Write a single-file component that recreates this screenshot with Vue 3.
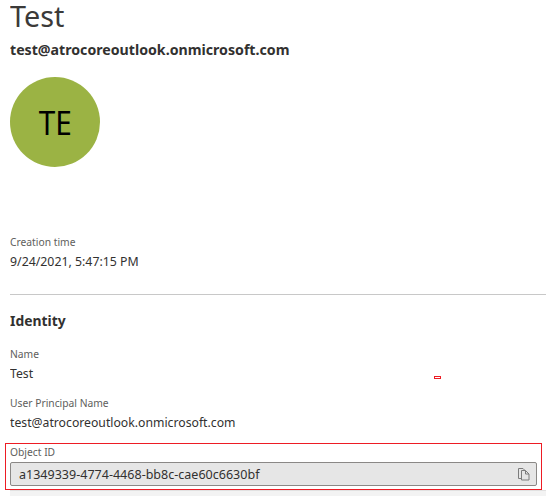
<script setup>
const fields = [
  { key: 'name', label: 'Name', value: 'Test' },
  { key: 'upn', label: 'User Principal Name', value: 'test@atrocoreoutlook.onmicrosoft.com' },
]
</script>

<template>
  <main class="profile">
    <h1 class="title">Test</h1>
    <p class="account">test@atrocoreoutlook.onmicrosoft.com</p>
    <div class="avatar"><span class="initials">TE</span></div>
    <div class="field created">
      <span class="label">Creation time</span>
      <span class="value date">9/24/2021, 5:47:15 PM</span>
    </div>
    <hr class="rule" />
    <h2 class="heading">Identity</h2>
    <div v-for="f in fields" :key="f.key" class="field" :class="f.key">
      <span class="label">{{ f.label }}</span>
      <span class="value">{{ f.value }}</span>
    </div>
    <section class="object">
      <span class="label">Object ID</span>
      <div class="copybox">
        <span class="id">a1349339-4774-4468-bb8c-cae60c6630bf</span>
        <svg class="copy" width="12" height="13" viewBox="0 0 12 13" fill="none" stroke="#7c7c7c">
          <path d="M3.500 10.500h-3v-10h4.500l1.500 1.500" />
          <path d="M3.500 2.500h4l3.500 3.500v6h-7.500z" fill="#e6e6e6" />
          <path d="M7.500 2.500v3.500h3.500" />
        </svg>
      </div>
    </section>
    <div class="strip"></div>
    <i class="mark"></i>
  </main>
</template>

<style>
body { background: #fff; overflow: hidden; }
</style>

<style scoped>
.profile {
  position: relative;
  box-sizing: border-box;
  width: 546px;
  height: 496px;
  padding-left: 10px;
  overflow: hidden;
  display: flex;
  flex-direction: column;
  font-family: "Noto Sans", "Open Sans", sans-serif;
  color: #323130;
}
.title, .account, .heading { margin: 0; white-space: nowrap; transform-origin: 0 50%; }
.title { height: 36px; line-height: 32px; font-size: 28.5px; font-weight: 400; color: #3b3a39; transform: scaleX(1.01); }
.account { height: 41px; line-height: 26px; font-size: 15px; font-weight: 700; transform: scaleX(0.944); }
.avatar {
  width: 90px;
  height: 90px;
  flex: none;
  border-radius: 50%;
  background: #9bb344;
  color: #000;
  display: flex;
  align-items: center;
  justify-content: center;
  font-size: 32px;
  line-height: 44px;
}
.initials { transform: translate(0.5px, 1px) scaleX(0.93); }
.field { display: flex; flex-direction: column; align-items: flex-start; height: 49px; flex: none; white-space: nowrap; }
.created { margin-top: 66px; height: 61px; }
.label, .value, .id { transform-origin: 0 50%; }
.label { font-size: 11px; line-height: 18px; color: #605e5c; transform: scaleX(0.935); }
.value { font-size: 13px; line-height: 20px; transform: scaleX(0.94); }
.date { transform: scaleX(0.948); }
.rule { width: 100%; height: 1px; margin: 0; border: 0; background: #c8c8c8; flex: none; }
.heading { height: 50px; line-height: 51px; font-size: 15px; font-weight: 700; transform: scaleX(0.925); }
.object {
  box-sizing: border-box;
  width: 537px;
  height: 47px;
  flex: none;
  margin-left: -5px;
  padding: 0 4px;
  border: 1px solid #ed1c24;
  display: flex;
  flex-direction: column;
}
.object .label { line-height: 16px; height: 18px; }
.copybox {
  box-sizing: border-box;
  width: 527px;
  height: 24px;
  display: flex;
  align-items: center;
  justify-content: space-between;
  padding: 0 6px 0 8px;
  border: 1px solid #8a8886;
  border-radius: 2px;
  background: #e6e6e6;
}
.id { font-size: 13px; line-height: 20px; transform: scaleX(0.964); }
.strip { flex: 1; border-top: 1px solid #e1e1e1; background: #f3f3f3; }
.mark { position: absolute; left: 434px; top: 376px; width: 5px; height: 1px; border: 1px solid #ed1c24; }
</style>
